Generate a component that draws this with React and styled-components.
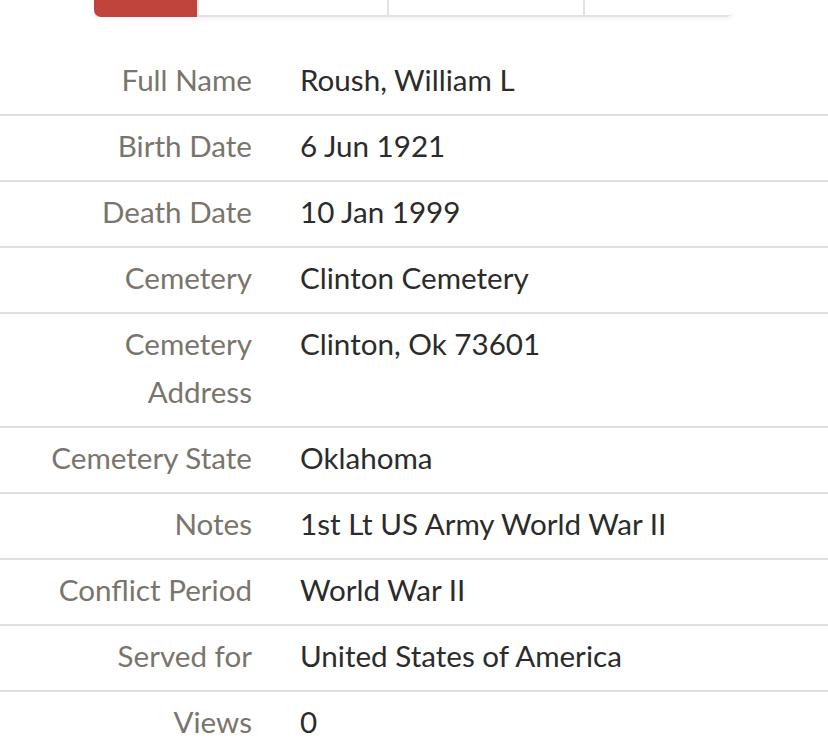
import React from "react";
import styled, { createGlobalStyle } from "styled-components";

const Global = createGlobalStyle`
  html, body { margin: 0; padding: 0; background: #fff; }
  body { font-family: "Lato", "Noto Sans", sans-serif; }
`;

const Page = styled.div`
  width: 828px;
  height: 747px;
  overflow: hidden;
  background: #fff;
`;

const TabBar = styled.div`
  display: flex;
  margin-left: 94px;
  width: 639px;
  height: 17px;
  box-sizing: border-box;
  border: 2px solid #e2e2e2;
  border-top: none;
  border-radius: 0 0 7px 7px;
  box-shadow: 0 3px 4px rgba(0, 0, 0, 0.04);
`;

const Tab = styled.div`
  flex: 0 0 ${(p) => p.$w}px;
  box-sizing: border-box;
  background: ${(p) => (p.$active ? "#c1443c" : "#fff")};
  border-right: ${(p) => (p.$last ? "none" : "2px solid #e2e2e2")};
  border-radius: ${(p) => (p.$active ? "0 0 0 7px" : p.$last ? "0 0 6px 0" : "0")};
  margin: ${(p) => (p.$active ? "0 0 -2px -2px" : "0")};
`;

const Table = styled.div`
  margin-top: 33px;
`;

const Row = styled.div`
  display: grid;
  grid-template-columns: 252px 1fr;
  column-gap: 48px;
  padding: 6px 0 10px;
  border-bottom: 2px solid #e0e0e0;
  font-size: 29.6px;
  line-height: 48px;
  white-space: nowrap;
`;

const Label = styled.div`
  text-align: right;
  color: #7a756c;
  width: 215px;
  justify-self: end;
  white-space: normal;
`;

const Value = styled.div`
  color: #2b2b2b;
`;

const rows = [
  ["Full Name", "Roush, William L"],
  ["Birth Date", "6 Jun 1921"],
  ["Death Date", "10 Jan 1999"],
  ["Cemetery", "Clinton Cemetery"],
  ["Cemetery Address", "Clinton, Ok 73601"],
  ["Cemetery State", "Oklahoma"],
  ["Notes", "1st Lt US Army World War II"],
  ["Conflict Period", "World War II"],
  ["Served for", "United States of America"],
  ["Views", "0"],
];

export default function App() {
  return (
    <Page>
      <Global />
      <TabBar>
        <Tab $active $w={105} />
        <Tab $w={190} />
        <Tab $w={196} />
        <Tab $last $w={150} />
      </TabBar>
      <Table>
        {rows.map(([l, v]) => (
          <Row key={l}>
            <Label>{l}</Label>
            <Value>{v}</Value>
          </Row>
        ))}
      </Table>
    </Page>
  );
}
